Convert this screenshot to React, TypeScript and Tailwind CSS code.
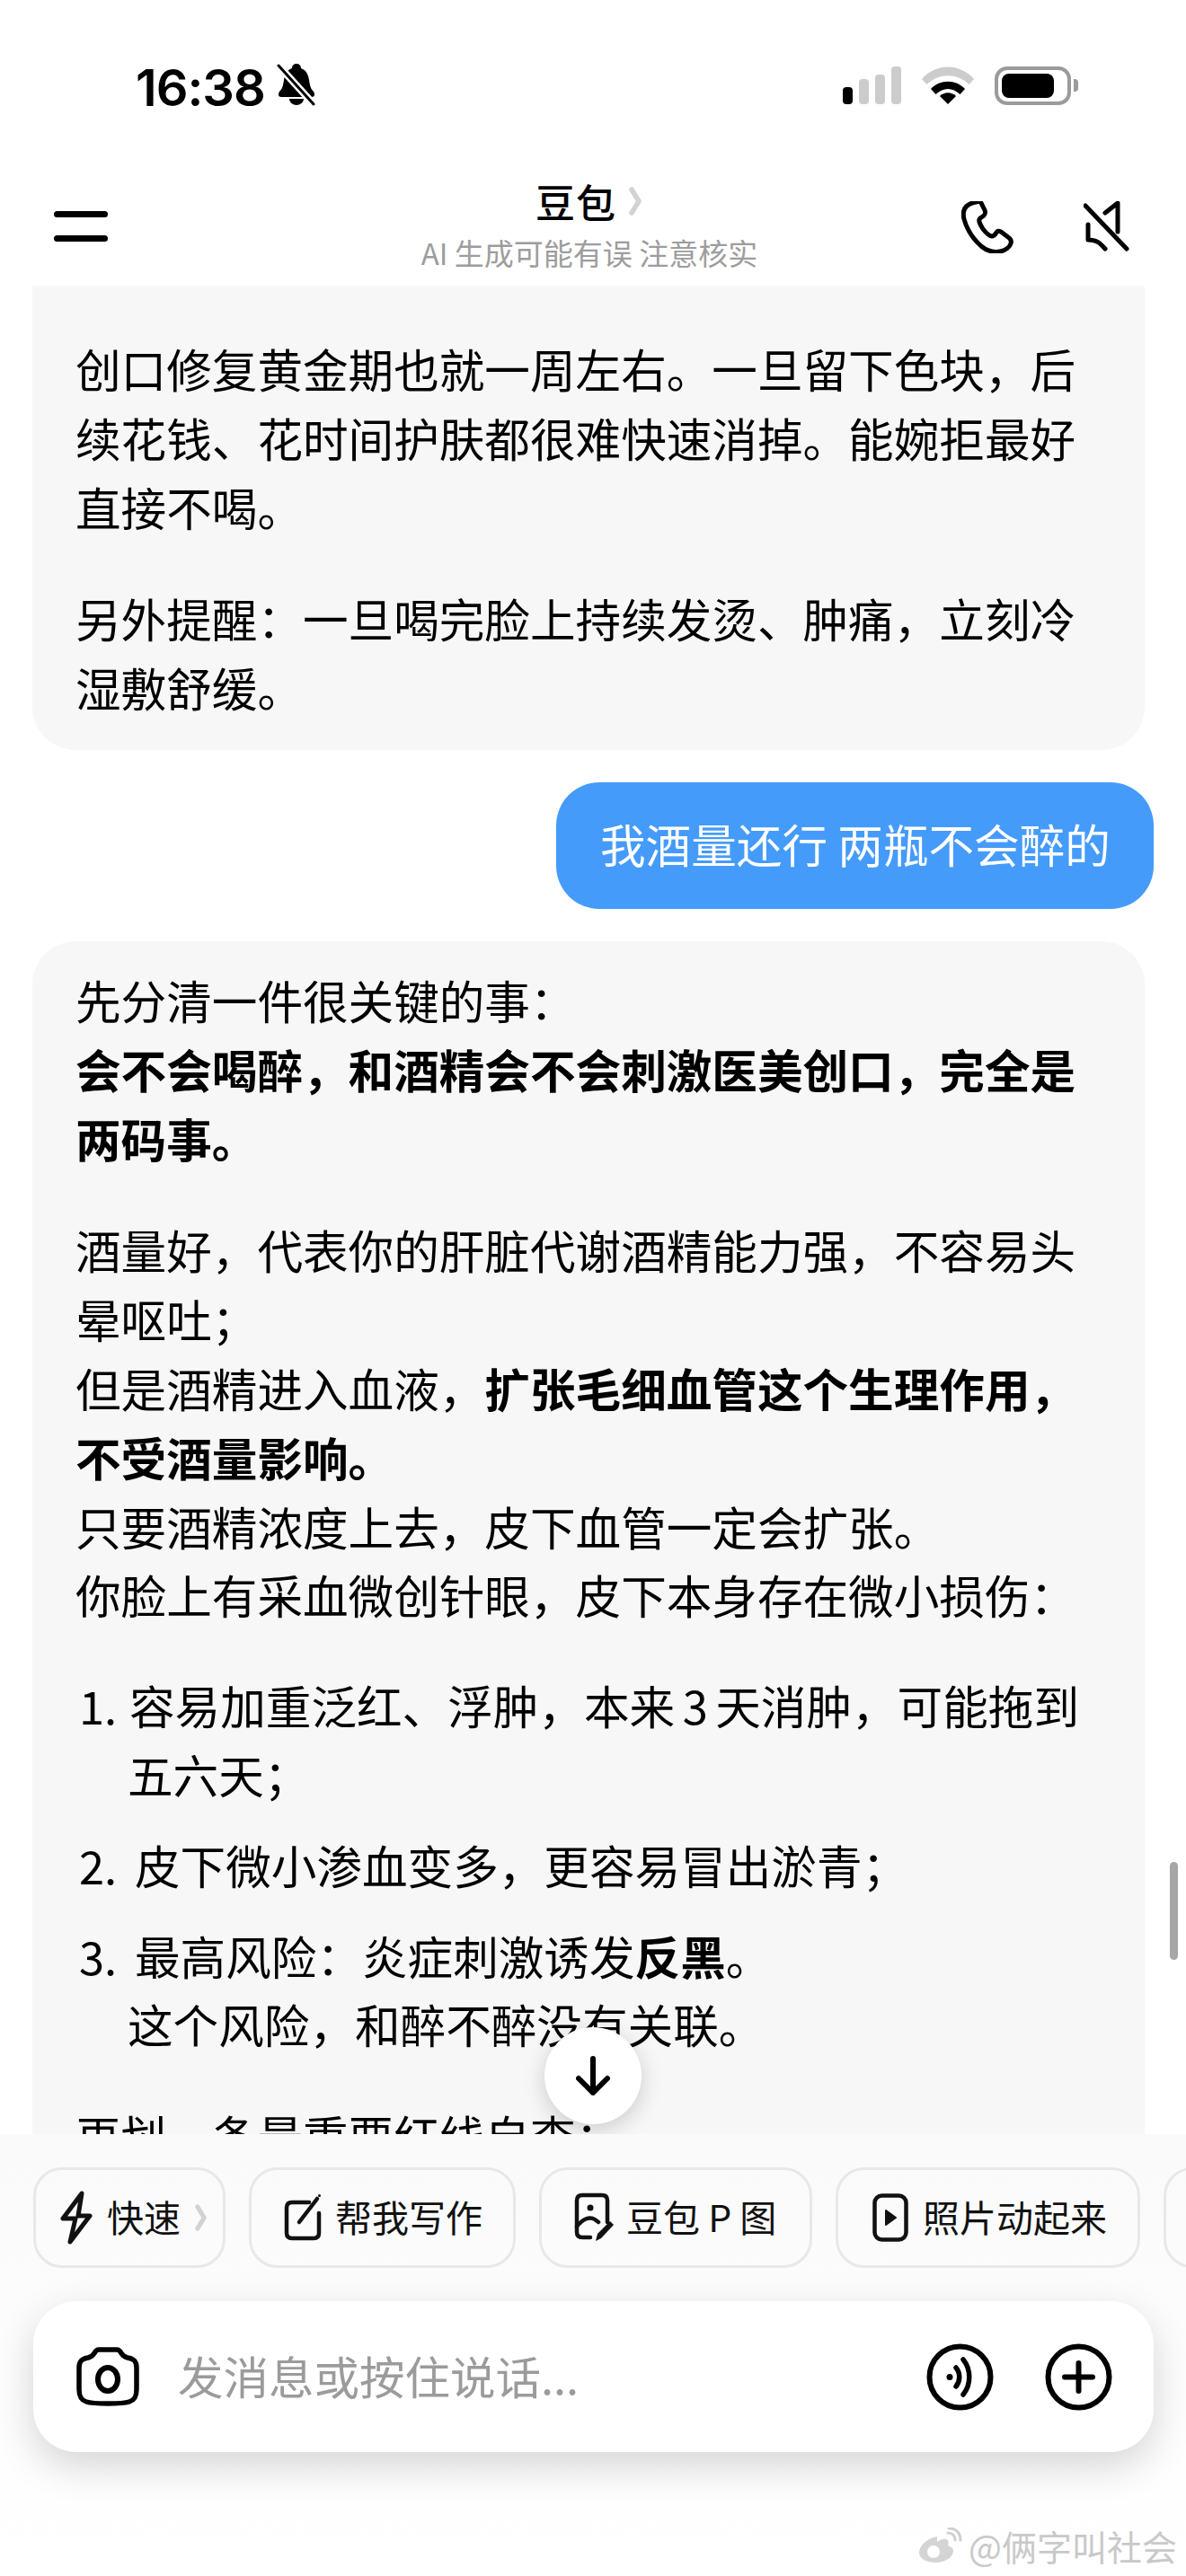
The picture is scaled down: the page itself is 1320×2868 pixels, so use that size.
import React from "react";

const F = '"Noto Sans CJK SC","Noto Sans",sans-serif';

function Line({ children, bold }: { children: React.ReactNode; bold?: boolean }) {
  return <div className={bold ? "font-semibold" : ""}>{children}</div>;
}

function Bell() {
  return (
    <svg width="44" height="48" viewBox="0 0 44 48" className="ml-[13px] -mt-[2px]">
      <path d="M22 1c3 0 5 2 5 5 6 2 8 7 9 13 1 7 2 10 5 13 2 3 1 6-2 6H5c-3 0-4-3-2-6 3-3 4-6 5-13 1-6 3-11 9-13 0-3 2-5 5-5z" fill="#000" />
      <path d="M14 40h16c0 4-4 7-8 7s-8-3-8-7z" fill="#000" />
      <path d="M2 3l39 43" stroke="#fff" strokeWidth="8" />
      <path d="M2 3l39 43" stroke="#000" strokeWidth="3" strokeLinecap="round" />
    </svg>
  );
}

function Signal() {
  return (
    <div className="flex items-end gap-[7px] h-[42px]">
      <div className="w-[11px] h-[19px] rounded-[4px] bg-black" />
      <div className="w-[11px] h-[28px] rounded-[4px] bg-[#cccccc]" />
      <div className="w-[11px] h-[33px] rounded-[4px] bg-[#cccccc]" />
      <div className="w-[11px] h-[42px] rounded-[4px] bg-[#cccccc]" />
    </div>
  );
}

function Wifi() {
  return (
    <svg width="58" height="42" viewBox="0 0 58 42" className="ml-[23px]">
      <path d="M0 14C16 -4 42 -4 58 14l-5.500 6C39 7 19 7 5.500 20z" fill="#cccccc" />
      <path d="M10 25C20 14 38 14 48 25l-5.500 6C34 23 24 23 15.500 31z" fill="#000" />
      <path d="M20 33c5-5 13-5 18 0l-9 9z" fill="#000" />
    </svg>
  );
}

function Battery() {
  return (
    <div className="ml-[23px] flex items-center">
      <div className="w-[85px] h-[43px] rounded-[14px] border-[4px] border-[#9b9b9b] p-[4px]">
        <div className="w-[58px] h-full rounded-[8px] bg-black" />
      </div>
      <div className="ml-[3px] w-[5px] h-[14px] rounded-r-[4px] bg-[#9b9b9b]" />
    </div>
  );
}

function Chevron({ w = 14, h = 32 }: { w?: number; h?: number }) {
  return (
    <svg width={w} height={h} viewBox="0 0 14 32">
      <path d="M3 3l8 13-8 13" fill="none" stroke="#d2d2d2" strokeWidth="5.500" strokeLinecap="round" strokeLinejoin="round" />
    </svg>
  );
}

function Phone() {
  return (
    <svg width="58" height="58" viewBox="0 0 58 58" fill="none" stroke="#000" strokeWidth="5" strokeLinejoin="round" strokeLinecap="round">
      <path d="M8 4C3 7 1 12 3 20c3 11 9 21 19 30 7 6 15 7 21 6 6-1 11-5 12-9 1-3 0-5-3-7l-8-6c-2-1-4-1-5 1-2 3-3 4-5 4-3 0-6-3-10-8-3-5-5-8-4-11 1-2 3-2 5-4 2-2 2-3 1-6l-5-10C17 1 12 1 8 4z" />
    </svg>
  );
}

function Muted() {
  return (
    <svg width="52" height="56" viewBox="0 0 52 56" fill="none" stroke="#000" strokeWidth="5" strokeLinecap="round" strokeLinejoin="round">
      <path d="M2 5l46 48" />
      <path d="M24 13L38 2v32" />
      <path d="M5 26v17c9 0 13 3 19 10" />
    </svg>
  );
}

function Bolt() {
  return (
    <svg width="36" height="60" viewBox="0 0 36 60" fill="none" stroke="#111" strokeWidth="5" strokeLinejoin="round" strokeLinecap="round">
      <path d="M24 3L3 31h14L11 57l22-29H20z" />
    </svg>
  );
}

function Edit() {
  return (
    <svg width="44" height="54" viewBox="0 0 44 54" fill="none" stroke="#111" strokeWidth="4.500" strokeLinecap="round" strokeLinejoin="round">
      <path d="M28 10H9c-4 0-6 2-6 6v28c0 4 2 6 6 6h24c4 0 6-2 6-6V22" />
      <path d="M17 32L37 6" />
      <circle cx="39.500" cy="2.500" r="1.500" fill="#111" stroke="none" />
    </svg>
  );
}

function PicEdit() {
  return (
    <svg width="46" height="56" viewBox="0 0 46 56" fill="none" stroke="#111" strokeWidth="4.500" strokeLinecap="round" strokeLinejoin="round">
      <path d="M18 50H9c-4 0-6-2-6-6V9c0-4 2-6 6-6h22c4 0 6 2 6 6v24" />
      <circle cx="18" cy="17" r="3.500" fill="#111" stroke="none" />
      <path d="M3 38c6-8 14-12 20-8l4 3" />
      <path d="M24 54l2-8 14-14 4 4-14 15z" fill="#111" stroke="none" />
    </svg>
  );
}

function Play() {
  return (
    <svg width="40" height="54" viewBox="0 0 40 54" fill="none" stroke="#111" strokeWidth="4.500" strokeLinejoin="round">
      <rect x="2.500" y="2.500" width="35" height="49" rx="8" />
      <path d="M15 19v16l11-8z" fill="#111" strokeWidth="2" />
    </svg>
  );
}

function Chip({ w, pl, gap, text, icon, tail }: { w: string; pl: string; gap: string; text: string; icon: React.ReactNode; tail?: boolean }) {
  return (
    <div className={`flex shrink-0 h-[112px] items-center rounded-[32px] border-[3px] border-[#e8e8e8] ${w} ${pl} ${gap} text-[41px] text-[#111111] whitespace-nowrap`}>
      {icon}
      <span className="pb-[2px]">{text}</span>
      {tail ? <Chevron w={13} h={32} /> : null}
    </div>
  );
}

export default function App() {
  return (
    <div
      className="relative flex flex-col w-[1320px] h-[2868px] overflow-hidden bg-white text-black"
      style={{ fontFamily: F }}
    >
      <div className="flex h-[154px] shrink-0 items-start pt-[72px] pl-[151px] pr-[120px]">
        <span className="font-['Inter'] text-[56px] font-semibold leading-[52px] tracking-[-1px]">16:38</span>
        <Bell />
        <div className="ml-auto flex items-center h-[46px]">
          <Signal />
          <Wifi />
          <Battery />
        </div>
      </div>

      <div className="relative flex h-[164px] shrink-0 items-start">
        <div className="absolute left-[60px] top-[81px] flex flex-col gap-[20px]">
          <div className="w-[60px] h-[7px] rounded-full bg-black" />
          <div className="w-[60px] h-[7px] rounded-full bg-black" />
        </div>
        <div className="absolute left-[596px] top-[40px] flex items-center gap-[14px] text-[44px] leading-[60px] font-medium tracking-[1px]">
          <span>豆包</span>
          <Chevron />
        </div>
        <div className="mx-auto pt-[106px] pr-[8px] text-[33px] leading-[42px] text-[#9d9d9d] whitespace-nowrap">AI 生成可能有误 注意核实</div>
        <div className="absolute left-[1070px] top-[70px]"><Phone /></div>
        <div className="absolute left-[1206px] top-[70px]"><Muted /></div>
      </div>

      <div className="relative h-[2058px] shrink-0 overflow-hidden">
        <div className="flex flex-col text-[50.600px] leading-[76.800px]">
          <div className="ml-[36px] mr-[46px] rounded-b-[48px] bg-[#f7f7f7] pl-[48px] pr-[20px] pt-[54px] pb-[31px]">
            <Line>创口修复黄金期也就一周左右。一旦留下色块，后</Line>
            <Line>续花钱、花时间护肤都很难快速消掉。能婉拒最好</Line>
            <Line>直接不喝。</Line>
            <div className="h-[48px]" />
            <Line>另外提醒：一旦喝完脸上持续发烫、肿痛，立刻冷</Line>
            <Line>湿敷舒缓。</Line>
          </div>
          <div className="mt-[36px] mr-[36px] self-end h-[141px] w-[665px] flex items-center rounded-[48px] bg-[#459bfa] pl-[49px] pb-[5px] text-white whitespace-nowrap">
            我酒量还行 两瓶不会醉的
          </div>
          <div className="mt-[36px] ml-[36px] mr-[46px] h-[1400px] rounded-t-[48px] bg-[#f7f7f7] pl-[48px] pr-[20px] pt-[27px]">
            <Line>先分清一件很关键的事：</Line>
            <Line bold>会不会喝醉，和酒精会不会刺激医美创口，完全是</Line>
            <Line bold>两码事。</Line>
            <div className="h-[48px]" />
            <Line>酒量好，代表你的肝脏代谢酒精能力强，不容易头</Line>
            <Line>晕呕吐；</Line>
            <Line>但是酒精进入血液，<b className="font-semibold">扩张毛细血管这个生理作用，</b></Line>
            <Line bold>不受酒量影响。</Line>
            <Line>只要酒精浓度上去，皮下血管一定会扩张。</Line>
            <Line>你脸上有采血微创针眼，皮下本身存在微小损伤：</Line>
            <div className="h-[46px]" />
            <div className="flex whitespace-nowrap"><span className="w-[60px] pl-[4px]">1.</span><span>容易加重泛红、浮肿，本来<span className="mx-[8.500px]">3</span>天消肿，可能拖到</span></div>
            <div className="pl-[58px]">五六天；</div>
            <div className="h-[24px]" />
            <div className="flex whitespace-nowrap"><span className="w-[66px] pl-[4px]">2.</span><span>皮下微小渗血变多，更容易冒出淤青；</span></div>
            <div className="h-[24px]" />
            <div className="flex whitespace-nowrap"><span className="w-[66px] pl-[4px]">3.</span><span>最高风险：炎症刺激诱发<b className="font-semibold">反黑</b>。</span></div>
            <div className="pl-[58px]">这个风险，和醉不醉没有关联。</div>
            <div className="h-[47px]" />
            <Line>再划一条最重要红线自查：</Line>
          </div>
        </div>
        <div className="absolute left-[1302px] top-[1755px] w-[9px] h-[109px] rounded-full bg-[#a6a6a6]" />
        <div className="absolute left-[606px] top-[1939px] flex items-center justify-center w-[108px] h-[108px] rounded-full bg-white shadow-[0_6px_24px_rgba(0,0,0,0.18)]">
          <svg width="38" height="44" viewBox="0 0 38 44" fill="none" stroke="#000" strokeWidth="6" strokeLinecap="round" strokeLinejoin="round">
            <path d="M19 3v38M3 25l16 16 16-16" />
          </svg>
        </div>
      </div>

      <div className="relative flex-1 bg-gradient-to-b from-[#fafafa] to-white">
        <div className="flex gap-[26px] pl-[37px] pt-[37px]">
          <Chip w="w-[214px]" pl="pl-[27px]" gap="gap-[16px]" text="快速" icon={<Bolt />} tail />
          <Chip w="w-[297px]" pl="pl-[36px]" gap="gap-[13px]" text="帮我写作" icon={<Edit />} />
          <Chip w="w-[304px]" pl="pl-[36px]" gap="gap-[12px]" text="豆包 P 图" icon={<PicEdit />} />
          <Chip w="w-[339px]" pl="pl-[38px]" gap="gap-[16px]" text="照片动起来" icon={<Play />} />
          <Chip w="w-[200px]" pl="pl-[38px]" gap="gap-[16px]" text="" icon={null} />
        </div>
        <div className="ml-[37px] mr-[36px] mt-[37px] flex h-[168px] items-center rounded-[48px] bg-white pl-[48px] pr-[46px] shadow-[0_16px_44px_rgba(0,0,0,0.16)]">
          <svg width="70" height="66" viewBox="0 0 70 66" fill="none" stroke="#000" strokeWidth="5.500" strokeLinejoin="round">
            <path d="M25 3h20c3 0 4 2 5 4 2 3 3 4 7 5 7 1 10 4 10 11v24c0 8-2 12-8 14-6 2-13 2-24 2s-18 0-24-2c-6-2-8-6-8-14V23c0-7 3-10 10-11 4-1 5-2 7-5 1-2 2-4 5-4z" />
            <ellipse cx="35" cy="36" rx="11" ry="13" strokeWidth="6" />
          </svg>
          <span className="ml-[43px] pb-[3px] text-[50.500px] text-[#9b9b9b] whitespace-nowrap">发消息或按住说话...</span>
          <svg className="ml-auto" width="75" height="75" viewBox="0 0 75 75" fill="none" stroke="#000" strokeWidth="6" strokeLinecap="round">
            <circle cx="37.500" cy="37.500" r="34" />
            <circle cx="26" cy="37.500" r="3.500" fill="#000" stroke="none" />
            <path d="M33 27c5 6 5 15 0 21" strokeWidth="5.500" />
            <path d="M41 18c9 11 9 28 0 39" strokeWidth="5.500" />
          </svg>
          <svg className="ml-[57px]" width="75" height="75" viewBox="0 0 75 75" fill="none" stroke="#000" strokeWidth="6" strokeLinecap="round">
            <circle cx="37.500" cy="37.500" r="34" />
            <path d="M37.500 22v31M22 37.500h31" />
          </svg>
        </div>
        <div className="absolute right-[10px] bottom-[14px] flex items-center gap-[6px] text-[39px] leading-[40px] text-[#c9c9c9] whitespace-nowrap">
          <svg width="50" height="40" viewBox="0 0 50 40" fill="none">
            <path d="M21 10C9 12 1 21 1 28c0 7 9 11 18 11 11 0 20-6 20-13 0-4-4-5-6-6 1-3 1-6-2-7-2-1-6 0-10 3" fill="#d4d4d4" />
            <circle cx="17" cy="27" r="7" fill="#fff" />
            <path d="M33 6c5 0 8 3 8 8M34 1c8 0 13 5 13 13" stroke="#cfcfcf" strokeWidth="3" strokeLinecap="round" />
          </svg>
          <span>@俩字叫社会</span>
        </div>
      </div>
    </div>
  );
}
